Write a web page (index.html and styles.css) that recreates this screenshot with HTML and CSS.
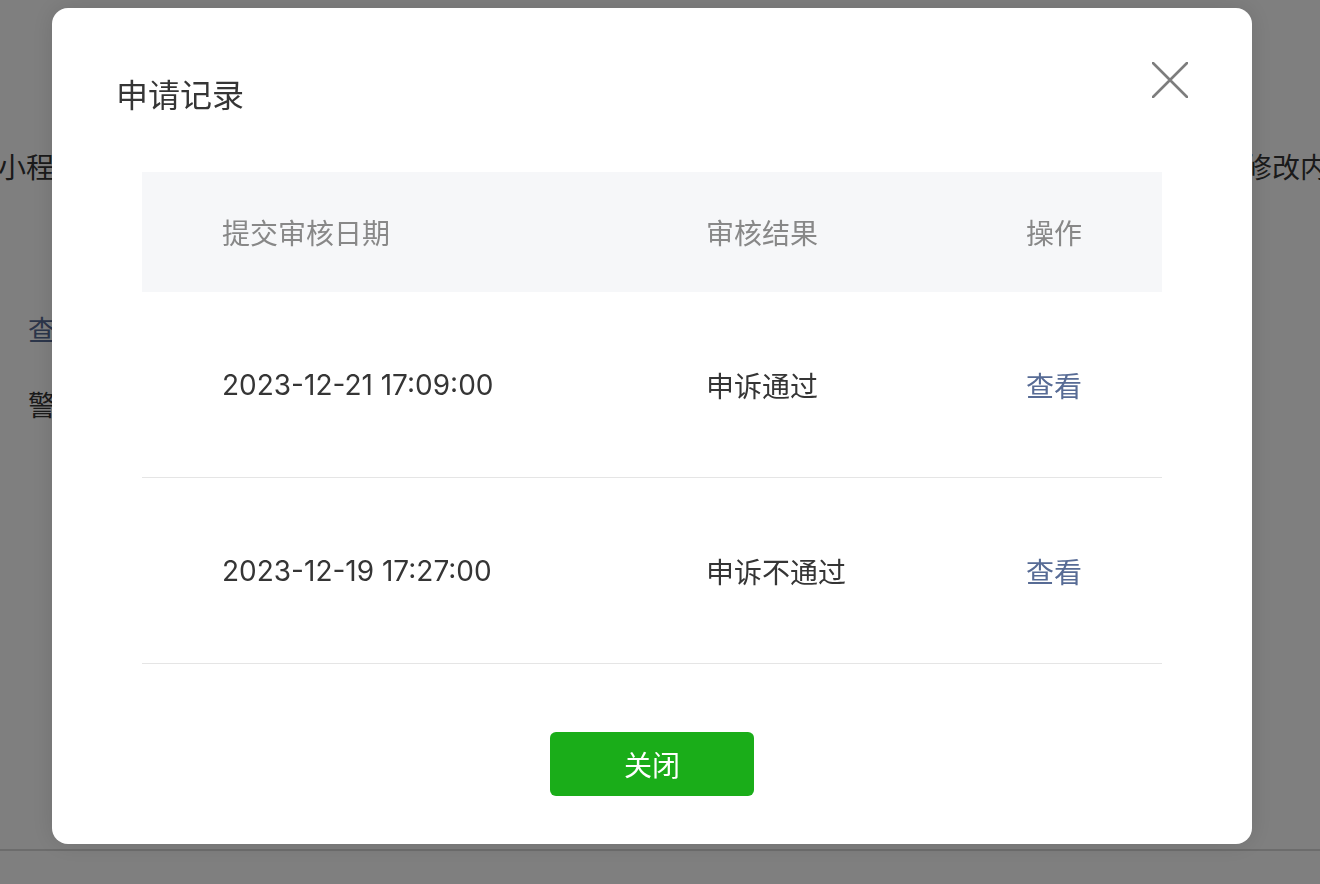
FILE: index.html
```html
<!DOCTYPE html>
<html lang="zh-CN">
<head>
    <meta charset="UTF-8">
    <meta name="viewport" content="width=device-width, initial-scale=1.0">
    <title>申请记录</title>
    <link rel="stylesheet" href="styles.css">
</head>
<body>
    <div class="page">
        <div class="notice-line">
            <span class="notice-left">小程序名称、头像及服务类目信息涉嫌违规</span>
            <span class="notice-right">请修改内容</span>
        </div>
        <div class="page-body">
            <a class="page-link" href="#">查看详情</a>
            <p class="page-text">警告</p>
        </div>
        <div class="page-footer"></div>
    </div>

    <div class="mask">
        <div class="dialog">
            <button class="dialog-close" type="button" aria-label="关闭">
                <svg width="36" height="36" viewBox="0 0 36 36">
                    <path d="M1 1 L35 35 M35 1 L1 35" stroke="#7d7d7d" stroke-width="2.6" fill="none" stroke-linecap="round"/>
                </svg>
            </button>
            <h3 class="dialog-title">申请记录</h3>

            <div class="record-table">
                <div class="record-row record-head">
                    <div class="cell">提交审核日期</div>
                    <div class="cell">审核结果</div>
                    <div class="cell">操作</div>
                </div>
                <div class="record-row">
                    <div class="cell">2023-12-21 17:09:00</div>
                    <div class="cell">申诉通过</div>
                    <div class="cell"><a class="link" href="#">查看</a></div>
                </div>
                <div class="record-row">
                    <div class="cell">2023-12-19 17:27:00</div>
                    <div class="cell">申诉不通过</div>
                    <div class="cell"><a class="link" href="#">查看</a></div>
                </div>
            </div>

            <div class="dialog-foot">
                <button class="btn-primary" type="button">关闭</button>
            </div>
        </div>
    </div>
</body>
</html>
```

FILE: styles.css
```css
body {
    margin: 0;
    padding: 0;
    background-color: #ffffff;
    color: #353535;
    font-family: "Inter", "Noto Sans CJK SC", sans-serif;
}
.page {
    height: 884px;
    overflow: hidden;
}
.notice-line {
    display: flex;
    justify-content: space-between;
    padding-top: 148px;
    font-size: 28px;
    line-height: 40px;
    white-space: nowrap;
    margin: 0 -36px 0 -2px;
}
.page-body {
    padding: 123px 28px 0;
}
.page-link {
    display: block;
    font-size: 28px;
    line-height: 40px;
    color: #576b95;
    text-decoration: none;
}
.page-text {
    margin: 35px 0 0;
    font-size: 28px;
    line-height: 40px;
}
.page-footer {
    margin-top: 423px;
    border-top: 2px solid #d9d9d9;
}

/* dialog */
.mask {
    position: fixed;
    top: 0;
    left: 0;
    right: 0;
    bottom: 0;
    background-color: rgba(0, 0, 0, 0.5);
    padding: 8px 0 0 52px;
}
.dialog {
    position: relative;
    width: 1200px;
    box-sizing: border-box;
    padding: 66px 90px 48px;
    background-color: #ffffff;
    border-radius: 16px;
    box-shadow: 0 0 24px rgba(0, 0, 0, 0.12);
}
.dialog-close {
    position: absolute;
    top: 54px;
    right: 64px;
    width: 36px;
    height: 36px;
    padding: 0;
    border: none;
    background: none;
    cursor: pointer;
}
.dialog-close svg {
    display: block;
}
.dialog-title {
    margin: 0 0 54px -26px;
    font-size: 32px;
    line-height: 44px;
    font-weight: normal;
    color: #353535;
}
.record-row {
    display: grid;
    grid-template-columns: 484px 320px 1fr;
    align-items: center;
    height: 185px;
    border-bottom: 1px solid #e5e5e5;
    font-size: 28px;
    color: #353535;
}
.record-head {
    height: 120px;
    border-bottom: none;
    background-color: #f6f7f9;
    color: #888888;
}
.cell {
    padding-left: 80px;
}
.link {
    color: #576b95;
    text-decoration: none;
}
.dialog-foot {
    display: flex;
    justify-content: center;
    margin-top: 68px;
}
.btn-primary {
    width: 204px;
    height: 64px;
    border: none;
    border-radius: 6px;
    background-color: #1aad19;
    color: #ffffff;
    font-family: "Inter", "Noto Sans CJK SC", sans-serif;
    font-size: 28px;
    cursor: pointer;
}
```
